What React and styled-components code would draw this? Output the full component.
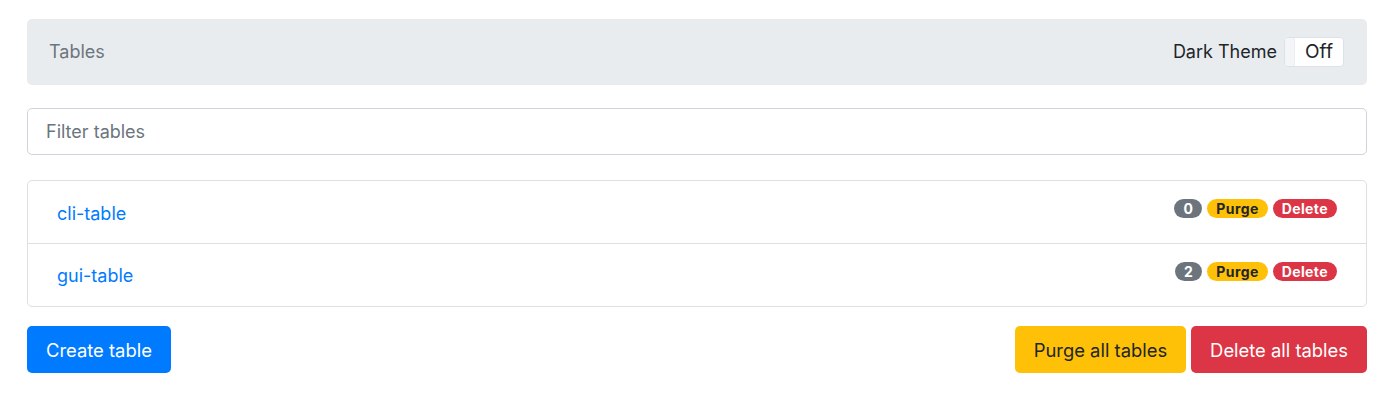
import React from "react";
import styled, { createGlobalStyle } from "styled-components";

const GlobalStyle = createGlobalStyle`
  body {
    margin: 0;
    background: #fff;
    font-family: Inter, "Liberation Sans", sans-serif;
    color: #212529;
  }
`;

const Page = styled.div`
  width: 1340px;
  margin-left: 27px;
  padding-top: 19px;
  display: flex;
  flex-direction: column;
`;

const Crumbs = styled.nav`
  display: flex;
  align-items: center;
  justify-content: space-between;
  height: 66px;
  padding: 0 23px 0 22px;
  background: #e9ecef;
  border-radius: 5px;
  box-sizing: border-box;
`;

const CrumbActive = styled.span`
  font-size: 18px;
  color: #6c757d;
  margin-top: -2px;
`;

const ThemeControl = styled.div`
  display: flex;
  align-items: center;
  gap: 7px;
  font-size: 18px;
  margin-top: -2px;
`;

const Toggle = styled.button`
  display: flex;
  align-items: center;
  height: 30px;
  width: 60px;
  padding: 0;
  background: #fff;
  border: 1px solid #dee2e6;
  border-radius: 4px;
  font-family: inherit;
  font-size: 19px;
  color: #212529;
  overflow: hidden;
  margin-top: 2px;
`;

const Handle = styled.span`
  width: 9px;
  align-self: stretch;
  background: #f4f5f6;
  border-right: 1px solid #eceef0;
`;

const ToggleLabel = styled.span`
  flex: 1;
  text-align: center;
  margin-top: -2px;
`;

const Filter = styled.input`
  margin-top: 23px;
  height: 47px;
  box-sizing: border-box;
  padding: 0 18px;
  border: 1px solid #ced4da;
  border-radius: 5px;
  font-family: inherit;
  font-size: 18px;
  color: #495057;
  outline: none;

  &::placeholder {
    color: #6c757d;
  }
`;

const List = styled.ul`
  list-style: none;
  margin: 25px 0 0;
  padding: 0;
  border: 1px solid #dfdfdf;
  border-radius: 5px;
`;

const Item = styled.li`
  display: flex;
  align-items: center;
  justify-content: space-between;
  height: 62px;
  padding: 0 29px 0 29px;
  border-top: ${p => (p.first ? "none" : "1px solid #dfdfdf")};
`;

const TableLink = styled.a`
  color: #007bff;
  text-decoration: none;
  font-size: 18px;
  margin-top: ${p => (p.first ? "2px" : "0")};
`;

const Badges = styled.div`
  display: flex;
  gap: 5px;
  margin-top: -7px;
`;

const Badge = styled.span`
  display: inline-flex;
  align-items: center;
  justify-content: center;
  height: 19px;
  padding: 0 9px;
  min-width: 7px;
  border-radius: 10px;
  font-size: 14px;
  font-weight: 700;
  letter-spacing: 0.4px;
  background: ${p => p.bg};
  color: ${p => p.fg};
`;

const Actions = styled.div`
  display: flex;
  align-items: center;
  margin-top: 19px;
  gap: 5px;
`;

const Button = styled.button`
  height: 47px;
  padding: 0 19px;
  border: none;
  border-radius: 5px;
  font-family: inherit;
  font-size: 18.4px;
  background: ${p => p.bg};
  color: ${p => p.fg};
  margin-right: ${p => (p.push ? "auto" : "0")};
`;

const tables = [
  { name: "cli-table", count: 0 },
  { name: "gui-table", count: 2 }
];

const App = () => {
  return (
    <React.Fragment>
      <GlobalStyle />
      <Page>
        <Crumbs>
          <CrumbActive>Tables</CrumbActive>
          <ThemeControl>
            <span>Dark Theme</span>
            <Toggle>
              <Handle />
              <ToggleLabel>Off</ToggleLabel>
            </Toggle>
          </ThemeControl>
        </Crumbs>
        <Filter placeholder="Filter tables" />
        <List>
          {tables.map((t, i) => (
            <Item key={t.name} first={i === 0}>
              <TableLink href="#" first={i === 0}>
                {t.name}
              </TableLink>
              <Badges>
                <Badge bg="#6c757d" fg="#fff">
                  {t.count}
                </Badge>
                <Badge bg="#ffc107" fg="#212529">
                  Purge
                </Badge>
                <Badge bg="#dc3545" fg="#fff">
                  Delete
                </Badge>
              </Badges>
            </Item>
          ))}
        </List>
        <Actions>
          <Button bg="#007bff" fg="#fff" push>
            Create table
          </Button>
          <Button bg="#ffc107" fg="#212529">
            Purge all tables
          </Button>
          <Button bg="#dc3545" fg="#fff">
            Delete all tables
          </Button>
        </Actions>
      </Page>
    </React.Fragment>
  );
};

export default App;
